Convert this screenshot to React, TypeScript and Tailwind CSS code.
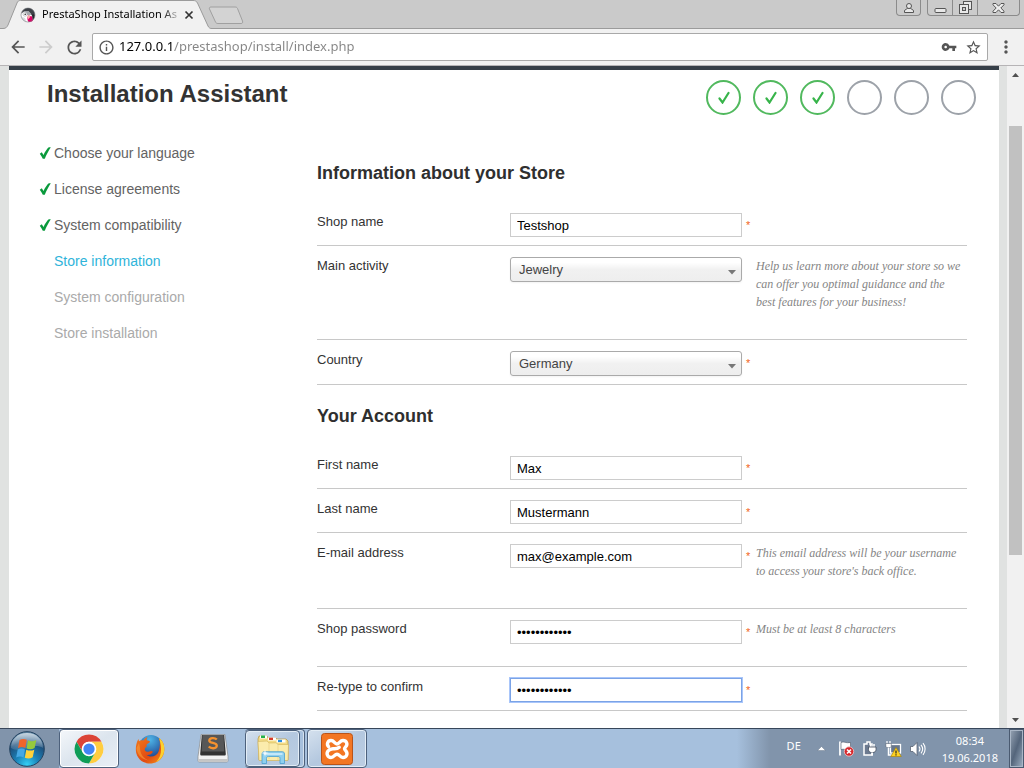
import React, { useState } from "react";
import {
  MdArrowBack,
  MdArrowForward,
  MdInfoOutline,
  MdMoreVert,
  MdRefresh,
  MdStarBorder,
  MdVpnKey,
} from "react-icons/md";

/* ---------- Browser chrome ---------- */

function PrestaIcon() {
  return (
    <svg viewBox="0 0 16 16" className="size-4 shrink-0" aria-hidden="true">
      <circle cx="8" cy="8" r="7" fill="#fff" />
      <path d="M1.4 6.6C2 3 5 1 8.2 1c3.600 0 6.300 2.600 6.700 6l-2.200 2.500L8.500 4.600 4 4.500z" fill="#3d4147" />
      <path d="M4.500 4.500l4-.4 3 3.200-2 1.200-3-.8z" fill="#a3a8ad" />
      <circle cx="5" cy="7.200" r="2" fill="#fff" stroke="#a7abb0" strokeWidth=".6" />
      <circle cx="5.200" cy="7.300" r=".8" fill="#222" />
      <path d="M8 8.500l4.500 1 .4 4.300c-1.200 1-2.800 1.400-4.300 1.200-1.300-1.200-1.600-4.200-.6-6.500z" fill="#df0067" />
      <path d="M7.400 8.200l3.200 1.300-2.400 2.800z" fill="#f7b5a5" />
      <path d="M12 7.500l2.900-.2c.2 2-.5 4.500-2.200 6z" fill="#23262b" />
      <path d="M1.200 9.500c.4 2.600 2.400 4.800 5.300 5.500L5 11z" fill="#d9dcdf" />
      <circle cx="8" cy="8" r="7" fill="none" stroke="#777b80" strokeWidth=".6" />
    </svg>
  );
}

function TabStrip() {
  const windowButton =
    "flex h-4 items-center justify-center border-[#8b8b8b] bg-[#cbcbcb] text-[#555]";
  return (
    <header className="flex h-7 shrink-0 items-start bg-[#cacaca]">
      <div className="relative h-[29px] w-[212px] shrink-0">
        <svg viewBox="0 0 212 29" className="absolute inset-0 h-full w-full" aria-hidden="true">
          <path
            d="M0 28.500H3C6 28.500 7 27 8 25L17 3C17.800 1.200 18.500 .5 20.500 .5H193C195 .5 196.500 1 197.500 3L208 26C209 28 210 28.500 212 28.500V29H0z"
            fill="#f1f1f1"
          />
          <path
            d="M0 28.500H3C6 28.500 7 27 8 25L17 3C17.800 1.200 18.500 .5 20.500 .5H193C195 .5 196.500 1 197.500 3L208 26C209 28 210 28.500 212 28.500"
            fill="none"
            stroke="#9b9b9b"
          />
        </svg>
        <div className="relative flex h-full items-center pr-4 pl-5">
          <PrestaIcon />
          <span className="ml-1.5 flex-1 bg-linear-to-r from-black from-85% to-transparent bg-clip-text text-[11px] whitespace-nowrap text-transparent">
            PrestaShop Installation As
          </span>
          <button type="button" aria-label="Close tab" className="flex size-3.5 items-center justify-center">
            <svg viewBox="0 0 10 10" className="size-2.5" aria-hidden="true">
              <path d="M1.500 1.500l7 7M8.500 1.500l-7 7" stroke="#333" strokeWidth="1.700" />
            </svg>
          </button>
        </div>
      </div>
      <button type="button" aria-label="New tab" className="mt-1.5 -ml-1 h-[18px] w-9 shrink-0">
        <svg viewBox="0 0 36 18" className="h-full w-full" aria-hidden="true">
          <path
            d="M3 1h24c1.500 0 2 .5 2.500 1.500l5 12.500c.5 1.500 0 2.500-1.500 2.500H10c-1.500 0-2-.5-2.500-1.500l-6-13C1 2 1.500 1 3 1z"
            fill="#d3d3d3"
            stroke="#a0a0a0"
          />
        </svg>
      </button>
      <div className="flex-1" />
      <button type="button" aria-label="Profile" className={`${windowButton} w-[25px] rounded-b-sm border border-t-0`}>
        <svg viewBox="0 0 12 12" className="size-3" aria-hidden="true" fill="#e8e8e8" stroke="#555">
          <path d="M1.500 10.500v-1.500C1.500 7.500 4 7 4.500 6.500h3C8 7 10.500 7.500 10.500 9v1.500z" />
          <circle cx="6" cy="4" r="2.500" />
        </svg>
      </button>
      <div className="mr-1 ml-1.5 flex">
        <button type="button" aria-label="Minimize" className={`${windowButton} w-[26px] rounded-bl-sm border border-t-0`}>
          <svg viewBox="0 0 13 12" className="h-3 w-[13px]" aria-hidden="true">
            <rect x="1" y="6.500" width="11" height="4" rx="1" fill="#e8e8e8" stroke="#555" />
          </svg>
        </button>
        <button type="button" aria-label="Restore" className={`${windowButton} w-[25px] border-r border-b`}>
          <svg viewBox="0 0 13 13" className="size-[13px]" aria-hidden="true" fill="#e8e8e8" stroke="#555">
            <rect x="4.500" y=".5" width="8" height="8" />
            <rect x=".5" y="3.500" width="9" height="9" />
            <rect x="3.500" y="6.500" width="3" height="3" fill="#cbcbcb" />
          </svg>
        </button>
        <button type="button" aria-label="Close" className={`${windowButton} w-[42px] rounded-br-sm border-r border-b`}>
          <svg viewBox="0 0 13 12" className="h-3 w-[13px]" aria-hidden="true">
            <path
              d="M1 1.500h3l2.500 2.700L9 1.500h3v1.300L8.800 6l3.200 3.200v1.300H9L6.500 7.800 4 10.500H1V9.200L4.200 6 1 2.800z"
              fill="#eee"
              stroke="#555"
            />
          </svg>
        </button>
      </div>
    </header>
  );
}

function Toolbar() {
  const [url, setUrl] = useState("127.0.0.1/prestashop/install/index.php");
  return (
    <nav className="flex h-[38px] shrink-0 items-center border-y border-t-[#9b9b9b] border-b-[#b6b4b6] bg-[#f1f1f1] pl-2 text-[#555]">
      <button type="button" aria-label="Back" className="mr-2">
        <MdArrowBack className="size-5" />
      </button>
      <button type="button" aria-label="Forward" className="mr-2 text-[#ccc]">
        <MdArrowForward className="size-5" />
      </button>
      <button type="button" aria-label="Reload" className="mr-[7px]">
        <MdRefresh className="size-[21px]" />
      </button>
      <div className="flex h-7 flex-1 items-center rounded-xs border border-[#a9a9a9] bg-white px-[5px]">
        <MdInfoOutline className="size-[17px] shrink-0" />
        <input
          aria-label="Address"
          value={url}
          onChange={(e) => setUrl(e.target.value)}
          className="ml-1 min-w-0 flex-1 bg-linear-[90deg,#000_55px,#858585_55px] bg-clip-text text-[13px] text-transparent outline-none"
        />
        <button type="button" aria-label="Saved passwords">
          <MdVpnKey className="size-4" />
        </button>
        <button type="button" aria-label="Bookmark" className="ml-2">
          <MdStarBorder className="size-[17px]" />
        </button>
      </div>
      <button type="button" aria-label="Menu" className="ml-2 w-7">
        <MdMoreVert className="size-5" />
      </button>
    </nav>
  );
}

/* ---------- Page ---------- */

const STEPS = [
  { label: "Choose your language", state: "done" },
  { label: "License agreements", state: "done" },
  { label: "System compatibility", state: "done" },
  { label: "Store information", state: "current" },
  { label: "System configuration", state: "todo" },
  { label: "Store installation", state: "todo" },
];

const STEP_COLORS: Record<string, string> = {
  done: "text-[#636363]",
  current: "text-[#2fb4da]",
  todo: "text-[#aaa]",
};

function ProgressDots() {
  return (
    <div className="flex gap-3">
      {STEPS.map((s) => (
        <span
          key={s.label}
          className={`flex size-[35px] items-center justify-center rounded-full border-2 ${
            s.state === "done" ? "border-[#51b95e]" : "border-[#9da2a9]"
          }`}
        >
          {s.state === "done" && (
            <svg viewBox="0 0 12 13" className="h-[13px] w-3" aria-hidden="true">
              <path d="M1.500 7.500l3 4L10.500 2" fill="none" stroke="#37b44a" strokeWidth="2.200" strokeLinecap="round" />
            </svg>
          )}
        </span>
      ))}
    </div>
  );
}

function Sidebar() {
  return (
    <ol className="w-[308px] shrink-0 pt-5 pl-[30px] text-sm">
      {STEPS.map((s) => (
        <li key={s.label} className={`flex h-9 items-center gap-[3px] ${STEP_COLORS[s.state]}`}>
          <span className="w-3">
            {s.state === "done" && (
              <svg viewBox="0 0 12 12" className="size-3" aria-hidden="true">
                <path d="M.8 6.800L2.800 5.300l1.700 2.700C6 4.700 8 1.700 9.800.300h2C9.500 4 7.300 8 5.800 11.700H3.800C3 10 2 8.300.8 6.800z" fill="#0a9a3c" />
              </svg>
            )}
          </span>
          {s.label}
        </li>
      ))}
    </ol>
  );
}

type RowProps = {
  id: string;
  label: string;
  required?: boolean;
  help?: string;
  children: React.ReactNode;
};

function Row({ id, label, required, help, children }: RowProps) {
  return (
    <div className="flex items-start border-b border-[#c8c8c8] pt-[11px] pb-2">
      <label htmlFor={id} className="w-[193px] shrink-0 text-[13px] leading-[18px] text-[#333]">
        {label}
      </label>
      <div className="w-[232px] shrink-0">{children}</div>
      <span className="w-3.5 shrink-0 pl-1 text-[11px] leading-6 text-[#f26522]">{required ? "*" : ""}</span>
      {help && (
        <p className="mb-5 flex-1 pr-1 font-['Liberation_Serif',serif] text-xs leading-[18px] text-[#858585] italic">
          {help}
        </p>
      )}
    </div>
  );
}

type FieldProps = {
  id: string;
  label: string;
  value: string;
  type?: string;
  help?: string;
  active?: boolean;
};

function Field({ id, label, value, type = "text", help, active }: FieldProps) {
  const [text, setText] = useState(value);
  return (
    <Row id={id} label={label} required help={help}>
      <input
        id={id}
        type={type}
        value={text}
        onChange={(e) => setText(e.target.value)}
        className={`block h-6 w-full border bg-white px-1.5 text-[13px] text-black outline-none ${
          active ? "border-[#7ba3e6] ring-1 ring-[#a9c6fa]" : "border-[#ccc]"
        }`}
      />
    </Row>
  );
}

type ChoiceProps = {
  id: string;
  label: string;
  options: string[];
  required?: boolean;
  help?: string;
};

function Choice({ id, label, options, required, help }: ChoiceProps) {
  return (
    <Row id={id} label={label} required={required} help={help}>
      <div className="relative">
        <select
          id={id}
          className="block h-[25px] w-full appearance-none rounded-[3px] border border-[#aaa] bg-linear-to-b from-white from-20% via-[#f1f1f1] via-50% to-[#eee] px-2 text-[13px] text-[#444] shadow-xs outline-none"
        >
          {options.map((o) => (
            <option key={o}>{o}</option>
          ))}
        </select>
        <svg viewBox="0 0 8 5" className="pointer-events-none absolute top-[13px] right-1.5 h-[5px] w-2" aria-hidden="true">
          <path d="M0 0h8L4 4.500z" fill="#777" />
        </svg>
      </div>
    </Row>
  );
}

function SectionTitle({ children }: { children: React.ReactNode }) {
  return <h2 className="pt-5 pb-[18px] text-lg leading-[22px] font-bold text-[#2f2f2f]">{children}</h2>;
}

function Installer() {
  return (
    <main className="flex min-h-0 flex-1 bg-[#e0e2e1] pl-[9px]">
      <div className="min-w-0 flex-1 overflow-hidden border-t-4 border-[#363f48] bg-white font-['Liberation_Sans',Arial,sans-serif]">
        <div className="flex items-start justify-between pt-2.5 pr-[23px] pl-[38px]">
          <h1 className="text-2xl leading-7 font-bold text-[#333]">Installation Assistant</h1>
          <ProgressDots />
        </div>
        <div className="flex items-start">
          <Sidebar />
          <form className="min-w-0 flex-1 pt-[27px] pr-8">
            <SectionTitle>Information about your Store</SectionTitle>
            <Field id="shop" label="Shop name" value="Testshop" />
            <Choice
              id="activity"
              label="Main activity"
              options={["Jewelry"]}
              help="Help us learn more about your store so we can offer you optimal guidance and the best features for your business!"
            />
            <Choice id="country" label="Country" options={["Germany"]} required />
            <SectionTitle>Your Account</SectionTitle>
            <Field id="first" label="First name" value="Max" />
            <Field id="last" label="Last name" value="Mustermann" />
            <Field
              id="email"
              label="E-mail address"
              value="max@example.com"
              help="This email address will be your username to access your store's back office."
            />
            <Field
              id="password"
              label="Shop password"
              type="password"
              value="abcdefghijkl"
              help="Must be at least 8 characters"
            />
            <Field id="confirm" label="Re-type to confirm" type="password" value="abcdefghijkl" active />
          </form>
        </div>
      </div>
      <div className="w-2 shrink-0" />
      <div className="flex w-[17px] shrink-0 flex-col bg-[#f1f1f1] px-0.5">
        <div className="flex h-[17px] shrink-0 items-center justify-center">
          <svg viewBox="0 0 7 4" className="h-1 w-[7px]" aria-hidden="true">
            <path d="M0 4h7L3.500 0z" fill="#505050" />
          </svg>
        </div>
        <div className="flex-[43]" />
        <div className="flex-[429] bg-[#c1c1c1]" />
        <div className="flex-[156]" />
        <div className="flex h-[17px] shrink-0 items-center justify-center">
          <svg viewBox="0 0 7 4" className="h-1 w-[7px]" aria-hidden="true">
            <path d="M0 0h7L3.500 4z" fill="#505050" />
          </svg>
        </div>
      </div>
    </main>
  );
}

/* ---------- Taskbar ---------- */

function StartOrb() {
  return (
    <svg viewBox="0 0 36 36" className="size-9" aria-hidden="true">
      <defs>
        <radialGradient id="orb" cx="50%" cy="95%" r="95%">
          <stop offset="0" stopColor="#35d0f5" />
          <stop offset=".35" stopColor="#1b82b8" />
          <stop offset=".7" stopColor="#1d4f7c" />
          <stop offset="1" stopColor="#6d93b0" />
        </radialGradient>
        <linearGradient id="orbGloss" x1="0" y1="0" x2="0" y2="1">
          <stop offset="0" stopColor="#fff" stopOpacity=".65" />
          <stop offset="1" stopColor="#fff" stopOpacity=".1" />
        </linearGradient>
      </defs>
      <circle cx="18" cy="18" r="17.300" fill="url(#orb)" stroke="#24425f" strokeWidth="1" />
      <path d="M2 17C2 8 9 2 18 2s16 6 16 15c-5-3-11-2-16 0S6 20 2 17z" fill="url(#orbGloss)" />
      <path d="M10.500 9c2.500-1.500 5-1.400 7.300-.2L16.300 17c-2.400-1.300-4.800-1.200-7.300.2z" fill="#f0642a" />
      <path d="M19 9.300c2.600 1.200 5.200 1.200 8.300-.3l-1.700 8c-2.700 1.500-5.400 1.500-8 .4z" fill="#96c93c" />
      <path d="M8.700 18.400c2.500-1.300 4.900-1.300 7.300 0l-1.500 8c-2.300-1.300-4.800-1.200-7.300 0z" fill="#45a8e4" />
      <path d="M17.300 18.700c2.600 1.200 5.300 1.200 8 0l-1.600 7.600c-2.600 1.500-5.300 1.500-7.900.4z" fill="#ffd23a" />
    </svg>
  );
}

function ChromeLogo() {
  return (
    <svg viewBox="0 0 48 48" className="size-[30px]" aria-hidden="true">
      <circle cx="24" cy="24" r="23" fill="#fff" />
      <path d="M4.080 12.500A23 23 0 0 1 43.920 12.500L24 12.500A11.500 11.500 0 0 0 14.040 29.750z" fill="#db4437" />
      <path d="M43.920 12.500A23 23 0 0 1 24 47L33.960 29.750A11.500 11.500 0 0 0 24 12.500z" fill="#ffcd40" />
      <path d="M24 47A23 23 0 0 1 4.080 12.500L14.040 29.750A11.500 11.500 0 0 0 33.960 29.750z" fill="#0f9d58" />
      <circle cx="24" cy="24" r="11.500" fill="#fff" />
      <circle cx="24" cy="24" r="9" fill="#4285f4" />
    </svg>
  );
}

function FirefoxLogo() {
  return (
    <svg viewBox="0 0 30 30" className="size-[30px]" aria-hidden="true">
      <defs>
        <radialGradient id="globe" cx="45%" cy="20%" r="80%">
          <stop offset="0" stopColor="#4fb6e8" />
          <stop offset="1" stopColor="#1b3e8c" />
        </radialGradient>
        <linearGradient id="fox" x1="0" y1="0" x2="1" y2="1">
          <stop offset="0" stopColor="#f07a1d" />
          <stop offset=".6" stopColor="#e24a12" />
          <stop offset="1" stopColor="#f59a1b" />
        </linearGradient>
      </defs>
      <circle cx="16" cy="13" r="12" fill="url(#globe)" />
      <path d="M24 4c4 3 5.500 7 5.300 12C29 24 23 29.500 15 29.500 9 29.500 3 26 1.200 19 .2 13 1.500 8 3.500 5l.5 2.200C5.500 6 7 6 8.500 6.500 9.500 4.500 11 3.500 12.500 3c-.7 1.200-1 2.300-.7 3.300l2.700.7c.6.600.3 1.200-.2 1.700L11.700 10.300c-.2 1.200-.3 2 .1 2.700-1.500.3-2.200 1.300-2 2.700.4 1.800 2.200 2.500 4 2 1.300-.5 2.400-1 3.700-.2.400.4.300 1-.2 1.300-1.600 1.900-3.700 2.500-6 2 4 3.500 10.500 1.500 12.200-3C25.200 13 25.500 8 24 4z" fill="url(#fox)" />
      <path d="M24 4c4.500 3.500 5.800 8 5.200 13-.9 5.500-4 9-8 11 3.600-4 5-8 4.800-13C25.800 10.500 25 7 24 4z" fill="#fbd12e" />
      <path d="M1.500 14c.5 7 6 12 12.500 12.500C9 25 5 20 5 14l-1-5z" fill="#f9a33a" opacity=".55" />
    </svg>
  );
}

function SublimeLogo() {
  return (
    <svg viewBox="0 0 32 30" className="h-[30px] w-8" aria-hidden="true">
      <path d="M4 1.500h24l3 22v4c0 1-.5 1.500-1.500 1.500h-27C1.500 29 1 28.500 1 27.500v-4z" fill="#f2f2f2" stroke="#8a8a8a" strokeWidth=".7" />
      <path d="M1.300 26h29.400v1.800c0 .7-.4 1-1 1H2.300c-.6 0-1-.3-1-1z" fill="#c5c5c5" />
      <path d="M4.800 2h22.400l1.600 19c0 1-.5 1.500-1.500 1.500H4.700c-1 0-1.500-.5-1.500-1.500z" fill="#333" />
      <path d="M5.500 2h21l.8 16.500H4.700z" fill="#575757" />
      <path d="M19.800 6.500C18 4.500 12.500 4.300 12.300 7.500c-.1 3.200 7.700 1.700 7.500 5.200-.2 3.300-6 3.200-8 .8" fill="none" stroke="#f5922f" strokeWidth="2.300" />
    </svg>
  );
}

function FolderLogo() {
  return (
    <svg viewBox="0 0 34 32" className="h-8 w-[34px]" aria-hidden="true">
      <path d="M2 6l1-3h8l1 2h8l1 1h9l2 2v19H3z" fill="#f3dc85" stroke="#b9963c" strokeWidth=".7" />
      <path d="M4 2.500h7v3H4z" fill="#fff" />
      <path d="M5 2.500h4v2.500H5z" fill="#22b14c" />
      <path d="M12 4.500h8v3h-8z" fill="#fff" />
      <path d="M13 4.700h4v2.300h-4z" fill="#d83b2b" />
      <path d="M20.500 6.500h9v3h-9z" fill="#fff" />
      <path d="M22 6.800h4v2.300h-4z" fill="#2a8fe0" />
      <path d="M2 8.500l9-.5 2 2 7-.2 2 1.700h10.500L32 27.500H3z" fill="#fbecac" stroke="#d2b45b" strokeWidth=".6" />
      <path d="M22 11.500V27M13 10v16" stroke="#ead184" strokeWidth=".7" />
      <path d="M6 30.500V21c0-1.500.8-2.300 2.200-2.300h18c1.500 0 2.300.8 2.300 2.300v9.500h-4.500v-5c0-1.300-.6-2-2-2H12.500c-1.400 0-2 .7-2 2v5z" fill="#8fd0ef" stroke="#4a9fd0" strokeWidth=".8" />
      <path d="M8 21h18.500" stroke="#d6f1fc" strokeWidth="1.500" />
      <path d="M9 16l.7 3.300 3.300.7-3.300.7L9 24l-.7-3.300L5 20l3.300-.7z" fill="#fff" opacity=".85" />
    </svg>
  );
}

function XamppLogo() {
  return (
    <svg viewBox="0 0 32 32" className="size-8" aria-hidden="true">
      <rect x=".5" y=".5" width="31" height="31" rx="3" fill="#f37623" stroke="#b9541a" />
      <path
        d="M7.500 13.500C5.500 11.500 6.500 7.500 10 7.500c3.200 0 3.500 3.500 6 3.500s2.800-3.500 6-3.500c3.600 0 5 3.800 2.800 6.200-.8.900-1.300 1.300-1.300 2.100s.6 1.200 1.400 2.100c2.200 2.600.8 6.600-2.900 6.600-3.200 0-3.500-3.300-6-3.300s-2.800 3.300-6 3.300c-3.500 0-5-4-2.900-6.600 1.400-1.600 2.900-2.100 4.900-2.100h1.500c2 0 3.500-.3 4.700-1.500"
        fill="none"
        stroke="#fff"
        strokeWidth="3.400"
        strokeLinecap="round"
        strokeLinejoin="round"
      />
    </svg>
  );
}

function FlagIcon() {
  return (
    <svg viewBox="0 0 17 17" className="size-[17px]" aria-hidden="true">
      <path d="M2 1.500v14" stroke="#fff" strokeWidth="1.800" />
      <path d="M3 2.500c3-1.500 4.500 1 9.500 0v7C8 10.500 6 8.500 3 9.500z" fill="#fff" stroke="#4b5566" strokeWidth=".6" />
      <circle cx="11" cy="11.500" r="4.700" fill="#d7262b" stroke="#f1c9c9" strokeWidth=".8" />
      <path d="M9 9.500l4 4M13 9.500l-4 4" stroke="#fff" strokeWidth="1.600" />
    </svg>
  );
}

function PowerIcon() {
  return (
    <svg viewBox="0 0 16 17" className="h-[17px] w-4" aria-hidden="true">
      <path d="M2 4h3V2h3v2h2v11H2z" fill="#6c7a90" stroke="#fff" strokeWidth="1.500" />
      <path d="M8.500 4v3M12 4v3" stroke="#fff" strokeWidth="1.500" />
      <path d="M6.500 7h7.500v2.500c0 2-1.500 3-3 3h-1.500c-1.500 0-3-1-3-3z" fill="#fff" stroke="#3f4a5c" strokeWidth=".8" />
      <path d="M10.200 12.500v3" stroke="#fff" strokeWidth="1.500" />
    </svg>
  );
}

function NetworkIcon() {
  return (
    <svg viewBox="0 0 17 17" className="size-[17px]" aria-hidden="true">
      <rect x="5.500" y="4.500" width="10" height="8.500" fill="#67778d" stroke="#fff" strokeWidth="1.300" />
      <path d="M2 1v3M5 1v3" stroke="#fff" strokeWidth="1.200" />
      <path d="M.8 3.500h5.500v2.500c0 1-.7 1.500-1.500 1.500H2.300C1.500 7.500.8 7 .8 6z" fill="#fff" stroke="#3f4a5c" strokeWidth=".5" />
      <path d="M3.500 7.500V15H8" fill="none" stroke="#fff" strokeWidth="1.500" />
      <path d="M11 7.500l5.300 9H5.800z" fill="#ffd21f" stroke="#a87f00" strokeWidth=".6" />
      <path d="M11 10.500v3M11 14.300v1.200" stroke="#222" strokeWidth="1.200" />
    </svg>
  );
}

function VolumeIcon() {
  return (
    <svg viewBox="0 0 17 16" className="h-4 w-[17px]" aria-hidden="true">
      <path d="M1.500 5.500H4l4-4v13l-4-4H1.500z" fill="#fff" stroke="#4b5566" strokeWidth=".7" />
      <path d="M10 5.500c1.200 1.500 1.200 3.500 0 5M12 3.800c2 2.500 2 6 0 8.500M14 2.200c2.800 3.300 2.800 8.300 0 11.600" fill="none" stroke="#fff" strokeWidth="1.100" />
    </svg>
  );
}

function Taskbar() {
  const slot = "flex h-full items-center justify-center";
  const open =
    "rounded-sm border border-[#4d617c] bg-linear-to-br from-[#d5e1ee] via-[#b4c8df] to-[#bccee3] inset-ring inset-ring-[#e3edf6]";
  return (
    <footer className="flex h-10 shrink-0 items-stretch border-t border-[#37465a] bg-[#a6c0dd] text-white">
      <button type="button" aria-label="Start" className="flex w-[59px] shrink-0 items-center bg-[#8194ab] pl-[9px]">
        <StartOrb />
      </button>
      <button
        type="button"
        aria-label="Google Chrome"
        className={`${slot} w-[60px] rounded-sm border border-[#4d617c] bg-linear-to-br from-[#f4f7fa] via-[#dce5ee] to-[#e9eff5] inset-ring inset-ring-white`}
      >
        <ChromeLogo />
      </button>
      <button type="button" aria-label="Firefox" className={`${slot} w-[62px]`}>
        <FirefoxLogo />
      </button>
      <button type="button" aria-label="Sublime Text" className={`${slot} w-16 pb-0.5`}>
        <SublimeLogo />
      </button>
      <div className="flex rounded-sm border border-l-0 border-[#4d617c] pr-1 inset-ring inset-ring-[#d5e2ef]">
        <button type="button" aria-label="Windows Explorer" className={`${slot} w-[55px] ${open}`}>
          <FolderLogo />
        </button>
      </div>
      <button type="button" aria-label="XAMPP" className={`${slot} ml-0.5 w-[60px] ${open}`}>
        <XamppLogo />
      </button>
      <div className="flex flex-1 items-center justify-end bg-linear-[270deg,#8194ab_calc(100%_-_403px),#a6c0dd_calc(100%_-_370px)]">
        <span className="mb-1 text-[11px]">DE</span>
        <button type="button" aria-label="Show hidden icons" className="ml-4">
          <svg viewBox="0 0 9 5" className="h-[5px] w-[9px]" aria-hidden="true">
            <path d="M.5 4.500h8L4.500.500z" fill="#fff" stroke="#5b6a80" strokeWidth=".4" />
          </svg>
        </button>
        <div className="ml-3 flex items-center gap-[7px]">
          <FlagIcon />
          <PowerIcon />
          <NetworkIcon />
          <VolumeIcon />
        </div>
        <div className="mr-[11px] ml-4 text-center text-[11px] leading-[17px]">
          <div>08:34</div>
          <div>19.06.2018</div>
        </div>
      </div>
      <button
        type="button"
        aria-label="Show desktop"
        className="w-[15px] shrink-0 border border-[#4a5a70] bg-linear-to-br from-[#98a5b5] via-[#54657b] to-[#9fb0c3] inset-ring inset-ring-[#a9b6c6]"
      />
    </footer>
  );
}

export default function App() {
  return (
    <div className="flex h-screen flex-col overflow-hidden font-['Noto_Sans','Open_Sans',sans-serif]">
      <TabStrip />
      <Toolbar />
      <Installer />
      <Taskbar />
    </div>
  );
}
